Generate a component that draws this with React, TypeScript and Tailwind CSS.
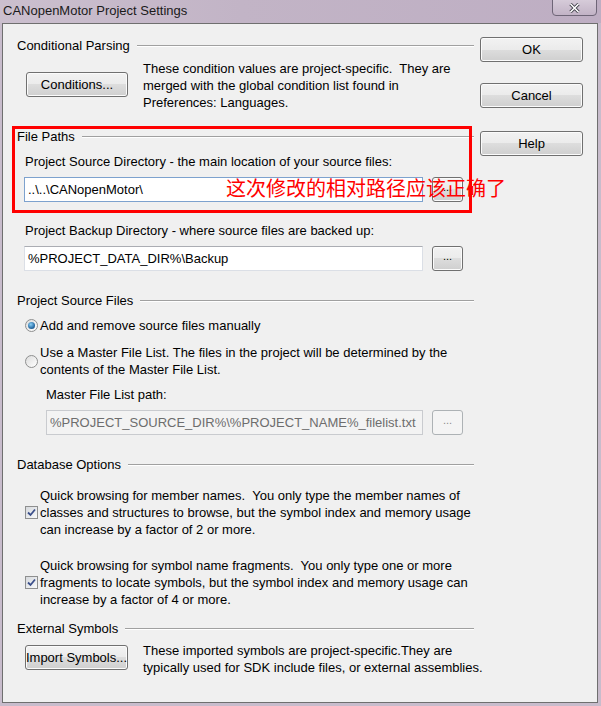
import React from "react"

const font = { fontFamily: '"Liberation Sans", Arial, sans-serif' }

function Heading({ title }: { title: string }) {
  return (
    <div className="flex h-[17px] items-center leading-[17px]">
      <span className="whitespace-nowrap">{title}</span>
      <div className="ml-[7px] h-[2px] flex-1 border-t border-b border-t-[#a0a0a0] border-b-white" />
    </div>
  )
}

function Button({ children, className = "" }: { children: React.ReactNode; className?: string }) {
  return (
    <div
      className={`flex h-[25px] items-center justify-center rounded-[3px] border border-[#707070] bg-[linear-gradient(#f2f2f2_0%,#ebebeb_50%,#dddddd_50%,#cfcfcf_100%)] shadow-[inset_0_0_0_1px_#fbfbfb] whitespace-nowrap ${className}`}
    >
      {children}
    </div>
  )
}

function BrowseButton({ disabled = false }: { disabled?: boolean }) {
  if (disabled) {
    return (
      <div className="ml-[9px] flex h-[25px] w-[31px] items-center justify-center rounded-[3px] border border-[#adb2b5] bg-[#f4f4f4] pb-[4px] text-[11px] text-[#8d8d8d]">
        ...
      </div>
    )
  }
  return <Button className="ml-[9px] w-[31px] pb-[4px] text-[11px]">...</Button>
}

function Radio({ checked }: { checked?: boolean }) {
  return (
    <div className="flex h-[13px] w-[13px] shrink-0 items-center justify-center rounded-full border border-[#8e8f8f] bg-[linear-gradient(135deg,#dcdcdc,#ffffff)]">
      {checked && (
        <div className="h-[7px] w-[7px] rounded-full bg-[radial-gradient(circle_at_40%_35%,#8ad0f7,#2a6ea6_60%,#103e6b)]" />
      )}
    </div>
  )
}

function Check() {
  return (
    <div className="flex h-[13px] w-[13px] shrink-0 items-center justify-center border border-[#8e8f8f] bg-[linear-gradient(135deg,#d6d9dd,#f8f9fa)]">
      <svg width="9" height="9" viewBox="0 0 9 9">
        <path d="M1 4.5 L3.5 7 L8 1.5" fill="none" stroke="#3b4f8a" strokeWidth="1.8" />
      </svg>
    </div>
  )
}

export default function App() {
  return (
    <div className="relative h-[706px] w-[601px] overflow-hidden bg-[#c8bccc] text-[13px] text-black" style={font}>
      {/* title bar */}
      <div className="relative h-[23px] bg-[linear-gradient(90deg,#cbbfce_0%,#c2b4c6_40%,#beaec3_100%)]">
        <div className="pl-[3px] pt-[2px] leading-[17px] text-[#1a1a1a]">CANopenMotor Project Settings</div>
        <div className="absolute right-[4px] top-[-1px] flex h-[17px] w-[45px] items-center justify-center rounded-b-[4px] border border-[#6e6577] bg-[linear-gradient(#d6cbd9,#c2b3c6)]">
          <svg width="11" height="10" viewBox="0 0 11 10">
            <path d="M1.5 1 L9.5 9 M9.5 1 L1.5 9" stroke="#3f3f48" strokeWidth="3.2" />
            <path d="M1.5 1 L9.5 9 M9.5 1 L1.5 9" stroke="#ffffff" strokeWidth="1.6" />
          </svg>
        </div>
      </div>

      {/* client area */}
      <div className="relative ml-[2px] h-[680px] w-[596px] border border-[#6f6f6f] bg-[#f0f0f0]">
        <div className="flex">
          {/* left column */}
          <div className="w-[471px] pl-[14px] pt-[13px]">
            <Heading title="Conditional Parsing" />
            <div className="mt-[6px] flex">
              <Button className="ml-[9px] mt-[12px] w-[102px]">Conditions...</Button>
              <p className="ml-[15px] whitespace-nowrap leading-[17px]">
                These condition values are project-specific.&nbsp; They are
                <br />
                merged with the global condition list found in
                <br />
                Preferences: Languages.
              </p>
            </div>

            <div className="mt-[17px]">
              <Heading title="File Paths" />
            </div>
            <div className="ml-[8px] mt-[8px] leading-[17px]">Project Source Directory - the main location of your source files:</div>
            <div className="mt-[7px] flex">
              <div className="ml-[7px] flex h-[25px] w-[399px] items-center border border-[#7da2ce] bg-white pl-[3px]">
                ..\..\CANopenMotor\
              </div>
              <BrowseButton />
            </div>

            <div className="ml-[8px] mt-[20px] leading-[17px]">Project Backup Directory - where source files are backed up:</div>
            <div className="mt-[7px] flex">
              <div className="ml-[7px] flex h-[25px] w-[399px] items-center border border-[#dbdfe6] border-t-[#abadb3] bg-white pl-[3px]">
                %PROJECT_DATA_DIR%\Backup
              </div>
              <BrowseButton />
            </div>

            <div className="mt-[21px]">
              <Heading title="Project Source Files" />
            </div>
            <div className="ml-[8px] mt-[8px] flex items-center leading-[17px]">
              <Radio checked />
              <span className="ml-[2px]">Add and remove source files manually</span>
            </div>
            <div className="ml-[8px] mt-[10px] flex items-center leading-[17px]">
              <Radio />
              <span className="ml-[2px] whitespace-nowrap">
                Use a Master File List. The files in the project will be determined by the
                <br />
                contents of the Master File List.
              </span>
            </div>
            <div className="ml-[29px] mt-[8px] leading-[17px]">Master File List path:</div>
            <div className="mt-[7px] flex">
              <div className="ml-[29px] flex h-[25px] w-[377px] items-center border border-[#c9cbcf] bg-[#f3f3f3] pl-[3px] text-[#6d6d6d]">
                %PROJECT_SOURCE_DIR%\%PROJECT_NAME%_filelist.txt
              </div>
              <BrowseButton disabled />
            </div>

            <div className="mt-[21px]">
              <Heading title="Database Options" />
            </div>
            <div className="ml-[8px] mt-[14px] flex items-center leading-[17px]">
              <Check />
              <span className="ml-[2px] whitespace-nowrap">
                Quick browsing for member names.&nbsp; You only type the member names of
                <br />
                classes and structures to browse, but the symbol index and memory usage
                <br />
                can increase by a factor of 2 or more.
              </span>
            </div>
            <div className="ml-[8px] mt-[19px] flex items-center leading-[17px]">
              <Check />
              <span className="ml-[2px] whitespace-nowrap">
                Quick browsing for symbol name fragments.&nbsp; You only type one or more
                <br />
                fragments to locate symbols, but the symbol index and memory usage can
                <br />
                increase by a factor of 4 or more.
              </span>
            </div>

            <div className="mt-[12px]">
              <Heading title="External Symbols" />
            </div>
            <div className="mt-[5px] flex">
              <Button className="ml-[8px] mt-[3px] w-[103px]">Import Symbols...</Button>
              <p className="ml-[15px] whitespace-nowrap leading-[17px]">
                These imported symbols are project-specific.They are
                <br />
                typically used for SDK include files, or external assemblies.
              </p>
            </div>
          </div>

          {/* right column */}
          <div className="ml-[6px] flex w-[103px] flex-col pt-[13px]">
            <Button>OK</Button>
            <Button className="mt-[21px]">Cancel</Button>
            <Button className="mt-[23px]">Help</Button>
          </div>
        </div>

        {/* annotation overlay */}
        <div className="pointer-events-none absolute left-[9px] top-[102px] h-[87px] w-[460px] border-[3px] border-[#ff0000]" />
        <div
          className="pointer-events-none absolute left-[223px] top-[154px] whitespace-nowrap text-[20px] leading-[20px] text-[#ff0000]"
          style={{ fontFamily: '"Noto Sans CJK SC", sans-serif' }}
        >
          这次修改的相对路径应该正确了
        </div>
      </div>
    </div>
  )
}
